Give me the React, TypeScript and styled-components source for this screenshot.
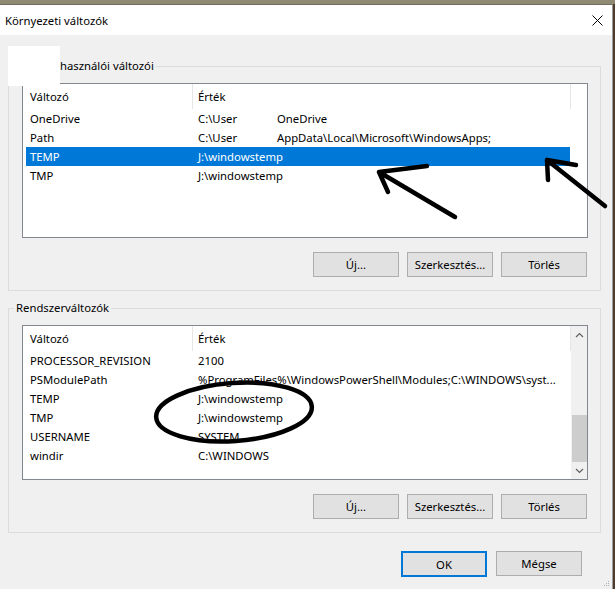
import React from "react";
import styled, { createGlobalStyle } from "styled-components";

const GlobalStyle = createGlobalStyle`
  html, body {
    margin: 0;
    padding: 0;
  }
  body {
    width: 615px;
    height: 589px;
    overflow: hidden;
    background: #7b7260;
    font-family: "Noto Sans", "Open Sans", sans-serif;
    color: #000;
  }
`;

const Page = styled.div`
  position: relative;
  width: 615px;
  height: 589px;
  padding-top: 4px;
  box-sizing: border-box;
  background: linear-gradient(to bottom, #918a72 0, #918a72 4px, #4d3b2e 4px);
`;

const Window = styled.div`
  position: relative;
  width: 613px;
  height: 585px;
  box-sizing: border-box;
  border-top: 1px solid #6f6b5d;
  border-right: 1px solid #9c9c9c;
  background: #f0f0f0;
  display: flex;
  flex-direction: column;
`;

const TitleBar = styled.div`
  height: 30px;
  flex: none;
  background: #fff;
  display: flex;
  align-items: center;
  justify-content: space-between;
  padding: 0 9px 0 5px;
  font-size: 11.3px;
`;

const CloseIcon = styled.svg`
  width: 11px;
  height: 11px;
`;

const Body = styled.div`
  flex: 1;
  display: flex;
  flex-direction: column;
  padding: 0 11px 0 8px;
`;

const GroupBox = styled.div<{ $top: number }>`
  position: relative;
  margin-top: ${(p) => p.$top}px;
  border: 1px solid #dcdcdc;
  padding: 0 12px 13px 13px;
  display: flex;
  flex-direction: column;
`;

const GroupTitle = styled.div<{ $indent: number }>`
  align-self: flex-start;
  margin: -9px 0 0 ${(p) => p.$indent}px;
  padding: 0 2px;
  height: 16px;
  line-height: 16px;
  font-size: 11.3px;
  background: #f0f0f0;
`;

const Redaction = styled.div`
  position: absolute;
  left: -1px;
  top: -21px;
  width: 52px;
  height: 40px;
  background: #fff;
  z-index: 2;
`;

const ListBox = styled.div`
  margin-top: 9px;
  height: 155px;
  box-sizing: border-box;
  border: 1px solid #828790;
  background: #fff;
  display: flex;
  overflow: hidden;
`;

const ListBody = styled.div`
  flex: 1;
  display: flex;
  flex-direction: column;
`;

const HeaderRow = styled.div`
  display: flex;
  height: 25px;
  flex: none;
  font-size: 11.3px;
`;

const HeaderCell = styled.div<{ $w: number; $pad: number }>`
  width: ${(p) => p.$w}px;
  box-sizing: border-box;
  padding-left: ${(p) => p.$pad}px;
  border-right: 1px solid #e5e5e5;
  display: flex;
  align-items: center;
`;

const Row = styled.div<{ $selected?: boolean }>`
  display: flex;
  height: 19px;
  width: 544px;
  margin-left: 3px;
  align-items: center;
  font-size: 11.3px;
  white-space: nowrap;
  background: ${(p) => (p.$selected ? "#0078d7" : "transparent")};
  color: ${(p) => (p.$selected ? "#fff" : "#000")};
`;

const NameCell = styled.div`
  width: 167px;
  padding-left: 4px;
  box-sizing: border-box;
  flex: none;
`;

const ValueCell = styled.div`
  flex: 1;
  padding-left: 5px;
  overflow: hidden;
  display: flex;
`;

const ValueHead = styled.span`
  display: inline-block;
  width: 40px;
  flex: none;
`;

const ValueTail = styled.span`
  margin-left: 39px;
`;

const ScrollBar = styled.div`
  width: 17px;
  flex: none;
  background: #f0f0f0;
  display: flex;
  flex-direction: column;
`;

const ScrollArrow = styled.div`
  height: 17px;
  flex: none;
  display: flex;
  align-items: center;
  justify-content: center;
`;

const ScrollTrack = styled.div`
  flex: 1;
  display: flex;
  flex-direction: column;
`;

const ScrollThumb = styled.div<{ $offset: number; $size: number }>`
  margin: ${(p) => p.$offset}px 1px 0 1px;
  height: ${(p) => p.$size}px;
  background: #cdcdcd;
`;

const ButtonRow = styled.div`
  display: flex;
  justify-content: flex-end;
  gap: 8px;
  margin-top: 14px;
  padding-right: 1px;
`;

const Button = styled.button<{ $default?: boolean }>`
  width: 86px;
  height: ${(p) => (p.$default ? 26 : 25)}px;
  box-sizing: border-box;
  background: #e1e1e1;
  border: ${(p) => (p.$default ? "2px solid #0078d7" : "1px solid #adadad")};
  font-family: inherit;
  font-size: 11.3px;
  color: #000;
  padding: 0;
`;

const Footer = styled.div`
  display: flex;
  justify-content: flex-end;
  gap: 9px;
  margin-top: 18px;
  padding-right: 19px;
`;

const Grip = styled.svg`
  position: absolute;
  right: 2px;
  bottom: 2px;
  width: 8px;
  height: 8px;
`;

const Annotations = styled.svg`
  position: absolute;
  left: 0;
  top: 0;
  width: 615px;
  height: 589px;
  pointer-events: none;
`;

type Item = { name: string; value: React.ReactNode; selected?: boolean };

// username part of the path is blanked out in the screenshot
const Split = ({ head, tail }: { head: string; tail: string }) => (
  <>
    <ValueHead>{head}</ValueHead>
    <ValueTail>{tail}</ValueTail>
  </>
);

const userVars: Item[] = [
  { name: "OneDrive", value: <Split head="C:\User" tail="OneDrive" /> },
  { name: "Path", value: <Split head="C:\User" tail="AppData\Local\Microsoft\WindowsApps;" /> },
  { name: "TEMP", value: "J:\\windowstemp", selected: true },
  { name: "TMP", value: "J:\\windowstemp" },
];

const systemVars: Item[] = [
  { name: "PROCESSOR_REVISION", value: "2100" },
  { name: "PSModulePath", value: "%ProgramFiles%\\WindowsPowerShell\\Modules;C:\\WINDOWS\\syst..." },
  { name: "TEMP", value: "J:\\windowstemp" },
  { name: "TMP", value: "J:\\windowstemp" },
  { name: "USERNAME", value: "SYSTEM" },
  { name: "windir", value: "C:\\WINDOWS" },
];

const Chevron = ({ up }: { up?: boolean }) => (
  <svg width="9" height="6" viewBox="0 0 9 6">
    <polyline
      points={up ? "1,5 4.5,1.5 8,5" : "1,1 4.5,4.5 8,1"}
      fill="none"
      stroke="#606060"
      strokeWidth="1.2"
    />
  </svg>
);

function VariableList({ items, scroll }: { items: Item[]; scroll?: boolean }) {
  return (
    <ListBox>
      <ListBody>
        <HeaderRow>
          <HeaderCell $w={170} $pad={7}>Változó</HeaderCell>
          <HeaderCell $w={378} $pad={5}>Érték</HeaderCell>
        </HeaderRow>
        {items.map((it) => (
          <Row key={it.name + String(it.value)} $selected={it.selected}>
            <NameCell>{it.name}</NameCell>
            <ValueCell>{it.value}</ValueCell>
          </Row>
        ))}
      </ListBody>
      {scroll && (
        <ScrollBar>
          <ScrollArrow>
            <Chevron up />
          </ScrollArrow>
          <ScrollTrack>
            <ScrollThumb $offset={72} $size={47} />
          </ScrollTrack>
          <ScrollArrow>
            <Chevron />
          </ScrollArrow>
        </ScrollBar>
      )}
    </ListBox>
  );
}

function Actions() {
  return (
    <ButtonRow>
      <Button>Új...</Button>
      <Button>Szerkesztés...</Button>
      <Button>Törlés</Button>
    </ButtonRow>
  );
}

export default function App() {
  return (
    <Page>
      <GlobalStyle />
      <Window>
        <TitleBar>
          <span>Környezeti változók</span>
          <CloseIcon viewBox="0 0 11 11">
            <path d="M0.5 0.5 L10.5 10.5 M10.5 0.5 L0.5 10.5" stroke="#000" strokeWidth="1" />
          </CloseIcon>
        </TitleBar>
        <Body>
          <GroupBox $top={31}>
            <Redaction />
            <GroupTitle $indent={36}>használói változói</GroupTitle>
            <VariableList items={userVars} />
            <Actions />
          </GroupBox>
          <GroupBox $top={17}>
            <GroupTitle $indent={-8}>Rendszerváltozók</GroupTitle>
            <VariableList items={systemVars} scroll />
            <Actions />
          </GroupBox>
          <Footer>
            <Button $default>OK</Button>
            <Button>Mégse</Button>
          </Footer>
        </Body>
        <Grip viewBox="0 0 8 8">
          {[
            [6, 2],
            [6, 4],
            [4, 4],
            [6, 6],
            [4, 6],
            [2, 6],
          ].map(([x, y]) => (
            <rect key={`${x}-${y}`} x={x} y={y} width="1" height="1" fill="#b0b0b0" />
          ))}
        </Grip>
      </Window>
      <Annotations viewBox="0 0 615 589">
        <g fill="none" stroke="#000" strokeWidth="4.5" strokeLinecap="round" strokeLinejoin="round">
          <path d="M455 217 L379 172 M379 172 L427 166 M379 172 L388 192" />
          <path d="M605 206 L547 160 M547 160 L576 165 M547 160 L548 180" />
          <ellipse cx="234" cy="412" rx="78" ry="29" transform="rotate(-4 234 412)" />
        </g>
      </Annotations>
    </Page>
  );
}
